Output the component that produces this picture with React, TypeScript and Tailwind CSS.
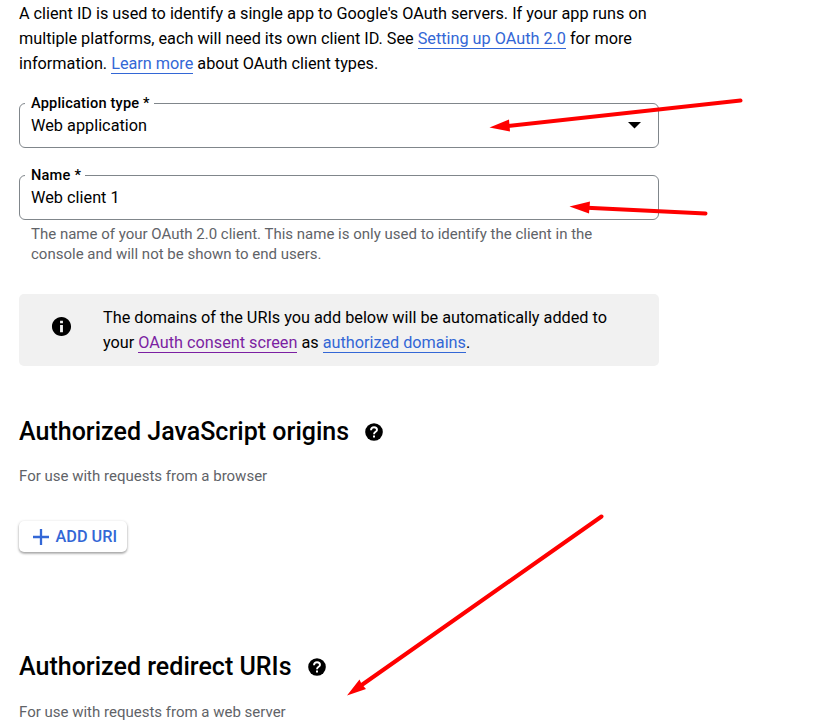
import type { ReactNode } from 'react';

function TextLink({ children, visited = false }: { children: ReactNode; visited?: boolean }) {
  return (
    <a className={visited ? 'border-b border-[#7b1fa2] text-[#7b1fa2]' : 'border-b border-[#3367d6] text-[#3367d6]'}>
      {children}
    </a>
  );
}

function Field({ label, labelClass, value, children }: { label: string; labelClass: string; value: string; children?: ReactNode }) {
  return (
    <div className="relative flex h-[45px] w-[640px] items-center justify-between rounded-[6px] border border-[#80868b] pr-[17px] pl-[11px]">
      <span className={`absolute -top-[11px] left-[5px] h-5 bg-white pl-[6px] leading-5 font-medium whitespace-nowrap ${labelClass}`}>
        {label}
      </span>
      <span className="text-[16.25px] leading-5 tracking-[0.02px]">{value}</span>
      {children}
    </div>
  );
}

function HelpIcon() {
  return (
    <svg className="-mt-px h-[18px] w-[18px]" viewBox="0 0 18 18">
      <circle cx="9" cy="9" r="8.800" />
      <path d="M6 7.200C6 5.300 7.300 4.200 9 4.200s3 1.100 3 2.700c0 1.900-3 2-3 4.300" fill="none" stroke="#fff" strokeWidth="1.900" />
      <path d="M8 12.500h2v2H8z" fill="#fff" />
    </svg>
  );
}

function SectionTitle({ children }: { children: ReactNode }) {
  return (
    <h2 className="flex h-8 items-center gap-[16px] text-[25px] leading-8 font-medium tracking-[0.02px] whitespace-nowrap">
      {children}
      <HelpIcon />
    </h2>
  );
}

export default function App() {
  return (
    <main className="relative h-[720px] w-[818px] overflow-hidden bg-white pt-px pl-[19px] font-[Roboto,'Liberation_Sans',sans-serif] text-black">
      <p className="text-[16.25px] leading-[25px] tracking-[-0.008px] whitespace-nowrap">
        A client ID is used to identify a single app to Google's OAuth servers. If your app runs on
        <br />
        multiple platforms, each will need its own client ID. See <TextLink>Setting up OAuth 2.0</TextLink> for more
        <br />
        information. <TextLink>Learn more</TextLink> about OAuth client types.
      </p>

      <div className="mt-[27px]">
        <Field label="Application type *" labelClass="w-[129px] text-[14.6px] tracking-[0.17px]" value="Web application">
          <svg className="h-[7px] w-[13px]" viewBox="0 0 13 7">
            <path d="M0 0h13L6.500 6.500z" />
          </svg>
        </Field>
      </div>
      <div className="mt-[27px]">
        <Field label="Name *" labelClass="w-[60px] text-[14.6px] tracking-[0.2px]" value="Web client 1" />
      </div>
      <p className="mt-1 pl-3 text-[15px] leading-5 whitespace-nowrap text-[#5f6368]">
        The name of your OAuth 2.0 client. This name is only used to identify the client in the
        <br />
        console and will not be shown to end users.
      </p>

      <aside className="mt-[30px] flex h-[72px] w-[640px] items-center rounded-[5px] bg-[#f1f1f1] pl-8">
        <svg className="-mt-[7px] mr-[31px] size-[21px]" viewBox="1 1 22 22">
          <path d="M12 2C6.480 2 2 6.480 2 12s4.480 10 10 10 10-4.480 10-10S17.520 2 12 2zm1.500 16h-3v-7.500h3V18zm0-9.500h-3V6h3v2.500z" />
        </svg>
        <p className="text-[16.25px] leading-[25px] tracking-[-0.008px] whitespace-nowrap">
          The domains of the URIs you add below will be automatically added to
          <br />
          your <TextLink visited>OAuth consent screen</TextLink> as <TextLink>authorized domains</TextLink>.
        </p>
      </aside>

      <section className="mt-[50px]">
        <SectionTitle>Authorized JavaScript origins</SectionTitle>
        <p className="mt-[18px] text-[15px] leading-5 text-[#5f6368]">For use with requests from a browser</p>
        <button className="mt-[35px] flex h-[31px] w-[108px] items-center rounded-[5px] bg-white pl-[13.5px] text-[16.25px] font-medium whitespace-nowrap text-[#3367d6] shadow-[0_1px_3px_rgba(0,0,0,0.3),0_2px_2px_rgba(0,0,0,0.15)]">
          <svg className="mt-px mr-[7px] size-4" viewBox="0 0 16 16">
            <path d="M8 0v16M0 8h16" stroke="currentColor" strokeWidth="2.300" />
          </svg>
          <span className="mt-px">ADD URI</span>
        </button>
      </section>

      <section className="mt-[99px]">
        <SectionTitle>Authorized redirect URIs</SectionTitle>
        <p className="mt-[19px] text-[15px] leading-5 text-[#5f6368]">For use with requests from a web server</p>
      </section>

      <svg className="pointer-events-none absolute inset-0 h-[720px] w-[818px]" viewBox="0 0 818 720">
        <g stroke="#f00" strokeWidth="4" strokeLinecap="round">
          <path d="M740.500 100.500L507 126" />
          <path d="M705.500 213.500L587 207.700" />
          <path d="M601.500 516.500L361 685.500" />
        </g>
        <g fill="#f00">
          <path d="M489.500 127.500L509 119.500L510 131.500z" />
          <path d="M569.500 206.500L590 201.500L589 213.500z" />
          <path d="M347 695.500L359.500 679.500L361.500 684L366 689z" />
        </g>
      </svg>
    </main>
  );
}
